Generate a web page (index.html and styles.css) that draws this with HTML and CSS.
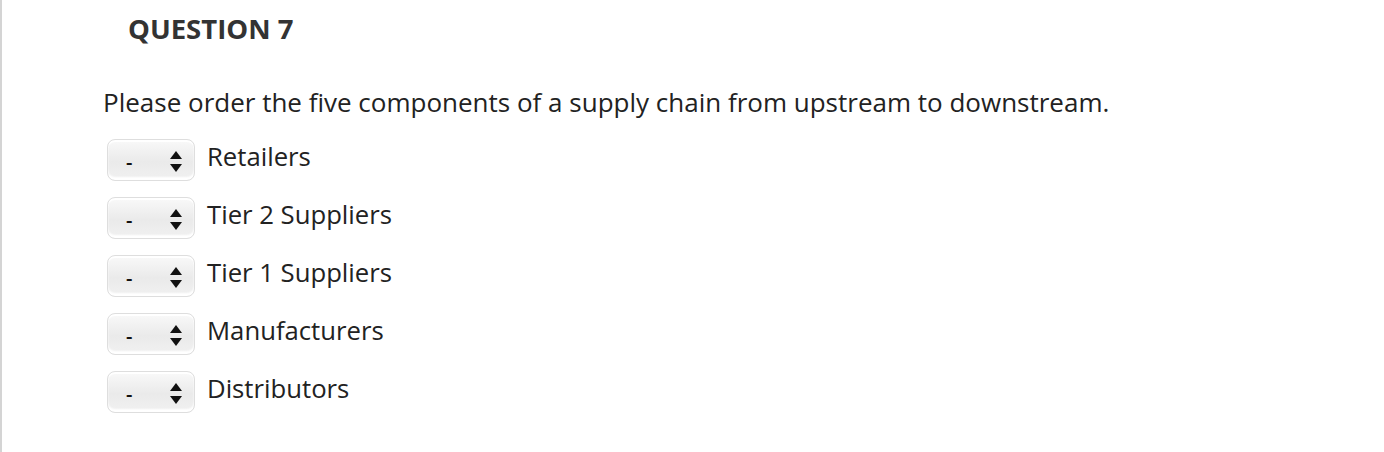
FILE: index.html
```html
<!DOCTYPE html>
<html lang="en">
<head>
    <meta charset="UTF-8">
    <meta name="viewport" content="width=device-width, initial-scale=1.0">
    <title>Question 7</title>
    <link rel="stylesheet" href="styles.css">
</head>
<body>
    <div class="page">
        <h2 class="question-title">QUESTION 7</h2>
        <p class="question-text">Please order the five components of a supply chain from upstream to downstream.</p>
        <div class="order-list">
            <div class="order-row">
                <div class="select-box"><span class="dash">-</span><svg class="arrows" width="12" height="21" viewBox="0 0 12 21"><path d="M6 0L12 8H0Z M0 13H12L6 21Z"/></svg></div>
                <span class="label">Retailers</span>
            </div>
            <div class="order-row">
                <div class="select-box"><span class="dash">-</span><svg class="arrows" width="12" height="21" viewBox="0 0 12 21"><path d="M6 0L12 8H0Z M0 13H12L6 21Z"/></svg></div>
                <span class="label">Tier 2 Suppliers</span>
            </div>
            <div class="order-row">
                <div class="select-box"><span class="dash">-</span><svg class="arrows" width="12" height="21" viewBox="0 0 12 21"><path d="M6 0L12 8H0Z M0 13H12L6 21Z"/></svg></div>
                <span class="label">Tier 1 Suppliers</span>
            </div>
            <div class="order-row">
                <div class="select-box"><span class="dash">-</span><svg class="arrows" width="12" height="21" viewBox="0 0 12 21"><path d="M6 0L12 8H0Z M0 13H12L6 21Z"/></svg></div>
                <span class="label">Manufacturers</span>
            </div>
            <div class="order-row">
                <div class="select-box"><span class="dash">-</span><svg class="arrows" width="12" height="21" viewBox="0 0 12 21"><path d="M6 0L12 8H0Z M0 13H12L6 21Z"/></svg></div>
                <span class="label">Distributors</span>
            </div>
        </div>
    </div>
</body>
</html>
```

FILE: styles.css
```css
body {
    margin: 0;
    background-color: #fff;
    font-family: "Open Sans", Arial, sans-serif;
    color: #222;
}

.page {
    height: 452px;
    border-left: 2px solid #d4d4d4;
    padding-left: 101px;
    box-sizing: border-box;
}

.question-title {
    margin: 0;
    padding: 11px 0 0 25px;
    font-size: 27.5px;
    font-weight: 700;
    color: #333;
    line-height: 36px;
}

.question-text {
    margin: 37px 0 0 0;
    font-size: 26px;
    line-height: 36px;
}

.order-list {
    display: flex;
    flex-direction: column;
    gap: 16px;
    margin-top: 19px;
}

.order-row {
    display: flex;
    align-items: center;
    gap: 12px;
    padding-left: 4px;
}

.select-box {
    width: 88px;
    height: 42px;
    box-sizing: border-box;
    border: 1px solid #dedede;
    border-radius: 8px;
    background: linear-gradient(#f9f9f9, #eaeaea 55%, #f1f1f1);
    box-shadow: inset 0 -3px 2px #fff, inset 0 2px 1px #fff;
    display: flex;
    align-items: center;
    justify-content: space-between;
    padding: 0 12px 0 18px;
    color: #111;
}

.dash {
    font-size: 20px;
    font-weight: 600;
    padding-top: 3px;
}

.arrows {
    fill: #111;
    margin-top: 2px;
}

.label {
    font-size: 25.7px;
    line-height: 36px;
    margin-top: -6px;
}
```
